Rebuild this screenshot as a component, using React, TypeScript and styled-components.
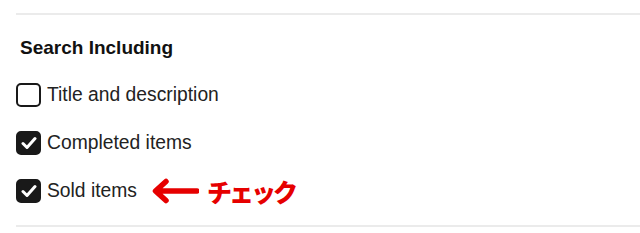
import React, { useState } from "react";
import styled, { createGlobalStyle } from "styled-components";

const GlobalStyle = createGlobalStyle`
  body {
    margin: 0;
    background: #fff;
    font-family: "Liberation Sans", Arial, sans-serif;
  }
`;

const Panel = styled.section`
  padding: 13px 0 0 16px;
`;

const Divider = styled.div`
  height: 2px;
  background: #ebebeb;
`;

const Heading = styled.h3`
  margin: 0;
  padding: 22px 0 0 4px;
  font-size: 19px;
  font-weight: 700;
  color: #111;
  line-height: 22px;
`;

const List = styled.div`
  display: flex;
  flex-direction: column;
  gap: 24px;
  padding: 24px 0 22px;
`;

const Row = styled.label`
  display: flex;
  align-items: center;
  gap: 6px;
  height: 24px;
  font-size: 19.3px;
  color: #222;
  cursor: pointer;
`;

const Box = styled.span<{ $checked: boolean }>`
  width: 25px;
  height: 24px;
  box-sizing: border-box;
  border-radius: 5px;
  border: 2px solid #191919;
  background: ${(p) => (p.$checked ? "#191919" : "#fff")};
  display: flex;
  align-items: center;
  justify-content: center;
  flex-shrink: 0;
`;

const Note = styled.span`
  display: flex;
  align-items: center;
  gap: 8px;
  margin-left: 8px;
  color: #e60000;
  font-family: "Noto Sans CJK JP", sans-serif;
  font-weight: 900;
  font-size: 25px;
  letter-spacing: -3px;
`;

const Check = () => (
  <svg width="16" height="14" viewBox="0 0 16 14">
    <path
      d="M2 7.5 L6 11.5 L14 2.5"
      fill="none"
      stroke="#fff"
      strokeWidth="3"
      strokeLinecap="round"
      strokeLinejoin="round"
    />
  </svg>
);

const Arrow = () => (
  <svg width="48" height="26" viewBox="0 0 48 26">
    <path
      d="M46 13 H6 M15 3.5 L4.5 13 L15 22.5"
      fill="none"
      stroke="#e60000"
      strokeWidth="5.5"
      strokeLinecap="round"
      strokeLinejoin="round"
    />
  </svg>
);

const items = [
  { label: "Title and description", checked: false },
  { label: "Completed items", checked: true },
  { label: "Sold items", checked: true, note: "チェック" },
];

export default function App() {
  const [state, setState] = useState(items.map((i) => i.checked));

  return (
    <>
      <GlobalStyle />
      <Panel>
        <Divider />
        <Heading>Search Including</Heading>
        <List>
          {items.map((item, i) => (
            <Row
              key={item.label}
              onClick={() => setState((s) => s.map((v, j) => (j === i ? !v : v)))}
            >
              <Box $checked={state[i]}>{state[i] && <Check />}</Box>
              {item.label}
              {item.note && (
                <Note>
                  <Arrow />
                  {item.note}
                </Note>
              )}
            </Row>
          ))}
        </List>
        <Divider />
      </Panel>
    </>
  );
}
